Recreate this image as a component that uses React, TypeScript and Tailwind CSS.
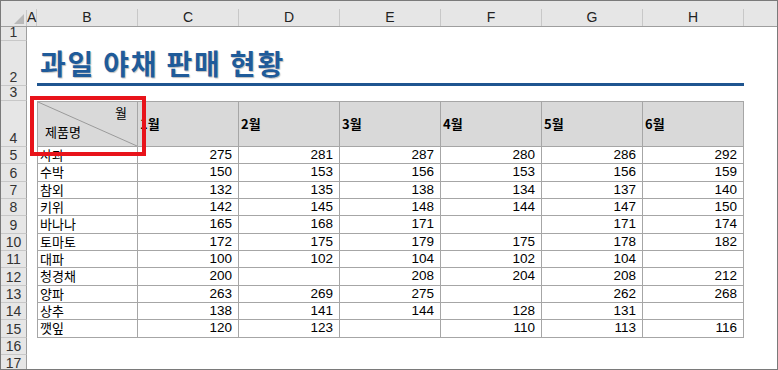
import React from "react";

const months = ["1월", "2월", "3월", "4월", "5월", "6월"];

const rows: [string, (number | null)[]][] = [
  ["사과", [275, 281, 287, 280, 286, 292]],
  ["수박", [150, 153, 156, 153, 156, 159]],
  ["참외", [132, 135, 138, 134, 137, 140]],
  ["키위", [142, 145, 148, 144, 147, 150]],
  ["바나나", [165, 168, 171, null, 171, 174]],
  ["토마토", [172, 175, 179, 175, 178, 182]],
  ["대파", [100, 102, 104, 102, 104, null]],
  ["청경채", [200, null, 208, 204, 208, 212]],
  ["양파", [263, 269, 275, null, 262, 268]],
  ["상추", [138, 141, 144, 128, 131, null]],
  ["깻잎", [120, 123, null, 110, 113, 116]],
];

const cols = ["B", "C", "D", "E", "F", "G", "H"];

const num = "font-['Liberation_Sans',Arial,sans-serif]";
const kr = "font-['Noto_Sans_CJK_KR','Noto_Sans',sans-serif]";

function RowNum({ n, h }: { n: number; h: string }) {
  return (
    <div
      className={`${h} w-[26px] shrink-0 flex items-end justify-center bg-[#e6e6e6] border-r border-b border-r-[#9e9e9e] border-b-[#c8c8c8] text-[14px] leading-[14px] text-[#333] pb-[1px] ${num}`}
    >
      {n}
    </div>
  );
}

export default function App() {
  return (
    <div className="w-[778px] h-[370px] border border-[#7a7a7a] bg-white overflow-hidden relative">
      {/* column headers */}
      <div className="flex h-[26px] bg-[#e6e6e6] border-b border-[#9e9e9e]">
        <div className="w-[26px] shrink-0 relative border-r border-[#c8c8c8] mt-[9px]">
          <svg className="absolute right-[2px] bottom-[2px]" width="10" height="10" viewBox="0 0 10 10">
            <polygon points="10,0 10,10 0,10" fill="#b9b9b9" />
          </svg>
        </div>
        <div className={`w-[10px] shrink-0 flex items-end justify-center text-[14px] text-[#222] ${num}`}>
          <div className="w-full h-[17px] leading-[17px] text-center border-r border-[#c8c8c8]">A</div>
        </div>
        {cols.map((c) => (
          <div key={c} className={`w-[101px] shrink-0 flex items-end text-[14px] text-[#222] ${num}`}>
            <div className="w-full h-[17px] leading-[17px] text-center border-r border-[#c8c8c8]">{c}</div>
          </div>
        ))}
        <div className="flex-1" />
      </div>

      {/* row 1 */}
      <div className="flex">
        <RowNum n={1} h="h-[14px]" />
      </div>

      {/* row 2: title */}
      <div className="flex">
        <RowNum n={2} h="h-[45px]" />
        <div className="w-[10px] shrink-0" />
        <div className="w-[707px] h-[45px] border-b-[3px] border-[#1f5590] flex items-end pb-[4px] pl-[3px]">
          <span
            className={`${kr} text-[28px] leading-[32px] font-bold tracking-[1.8px] text-[#1f5b9a] [text-shadow:1px_1px_1px_rgba(0,0,0,0.25)]`}
          >
            과일 야채 판매 현황
          </span>
        </div>
      </div>

      {/* row 3 */}
      <div className="flex">
        <RowNum n={3} h="h-[15px]" />
      </div>

      {/* row 4: table header */}
      <div className="flex">
        <RowNum n={4} h="h-[46px]" />
        <div className="w-[10px] shrink-0" />
        <div className={`relative w-[101px] h-[46px] shrink-0 bg-[#d9d9d9] border border-[#a6a6a6] ${kr} text-[13px] text-black`}>
          <svg className="absolute inset-0" width="99" height="44" viewBox="0 0 99 44" preserveAspectRatio="none">
            <line x1="0" y1="0" x2="99" y2="44" stroke="#9a9a9a" strokeWidth="1" />
          </svg>
          <span className="absolute right-[10px] top-[2px] leading-[18px]">월</span>
          <span className="absolute left-[7px] bottom-[5px] leading-[18px]">제품명</span>
        </div>
        {months.map((m) => (
          <div
            key={m}
            className={`w-[101px] h-[46px] shrink-0 bg-[#d9d9d9] border-t border-r border-b border-[#a6a6a6] flex items-center pl-[2px] ${kr} font-bold text-[13px] text-black`}
          >
            {m}
          </div>
        ))}
      </div>

      {/* data rows */}
      {rows.map(([name, vals], i) => (
        <div key={name} className="flex">
          <RowNum n={i + 5} h="h-[17.33px]" />
          <div className="w-[10px] shrink-0" />
          <div
            className={`w-[101px] h-[17.33px] shrink-0 border-l border-r border-b border-[#a6a6a6] pl-[2px] flex items-center ${kr} text-[13px] leading-[16px] text-black`}
          >
            {name}
          </div>
          {vals.map((v, j) => (
            <div
              key={j}
              className={`w-[101px] h-[17.33px] shrink-0 border-r border-b border-[#a6a6a6] flex items-center justify-end pr-[6px] ${num} text-[13.5px] leading-[16px] text-black`}
            >
              {v ?? ""}
            </div>
          ))}
        </div>
      ))}

      <div className="flex">
        <RowNum n={16} h="h-[17.33px]" />
      </div>
      <div className="flex">
        <RowNum n={17} h="h-[17.33px]" />
      </div>

      {/* selection highlight */}
      <div className="absolute left-[29px] top-[95px] w-[116px] h-[60px] border-[4px] border-[#e8131a]" />
    </div>
  );
}
